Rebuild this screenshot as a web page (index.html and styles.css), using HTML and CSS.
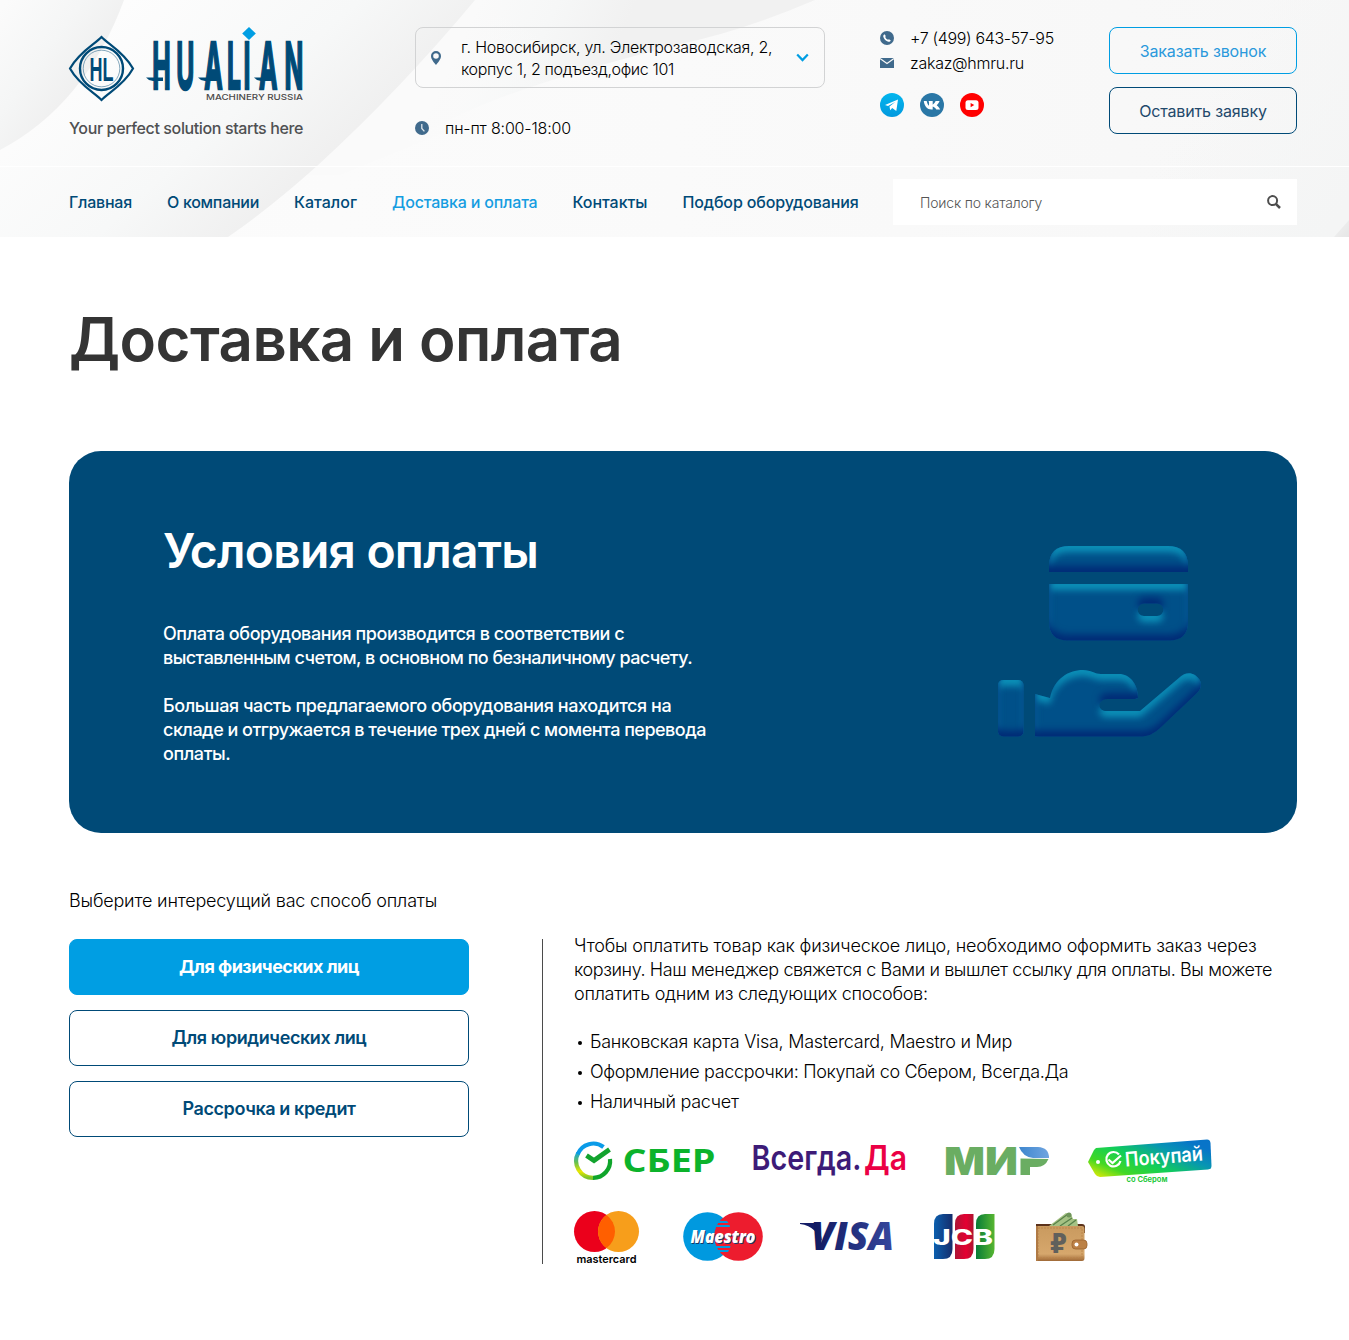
FILE: index.html
```html
<!DOCTYPE html>
<html lang="ru">
<head>
<meta charset="utf-8">
<title>Доставка и оплата</title>
<link rel="stylesheet" href="styles.css">
</head>
<body>
<header class="header">
  <svg class="header-bg" viewBox="0 0 1349 237" preserveAspectRatio="none" aria-hidden="true">
    <defs>
      <linearGradient id="b0" x1="0" x2="1"><stop offset="0" stop-color="#fcfcfc"/><stop offset=".5" stop-color="#fafafa"/><stop offset="1" stop-color="#f7f7f7"/></linearGradient>
      <linearGradient id="b1" gradientUnits="userSpaceOnUse" x1="0" y1="10" x2="90" y2="75"><stop offset="0" stop-color="#fbfbfb"/><stop offset=".55" stop-color="#f5f6f6"/><stop offset="1" stop-color="#efefef"/></linearGradient>
      <linearGradient id="b2" gradientUnits="userSpaceOnUse" x1="130" y1="0" x2="300" y2="190"><stop offset="0" stop-color="#fdfdfd"/><stop offset=".6" stop-color="#f7f8f8"/><stop offset="1" stop-color="#efefef"/></linearGradient>
      <linearGradient id="b3" gradientUnits="userSpaceOnUse" x1="480" y1="0" x2="610" y2="60"><stop offset="0" stop-color="#fafafa"/><stop offset=".5" stop-color="#f6f7f7"/><stop offset="1" stop-color="#f1f1f1"/></linearGradient>
      <linearGradient id="b4" x1="0" x2="1" y1="0" y2="1"><stop offset="0" stop-color="#f1f2f2"/><stop offset="1" stop-color="#e6e6e6"/></linearGradient>
      <linearGradient id="b5" gradientUnits="userSpaceOnUse" x1="1200" y1="100" x2="1349" y2="200"><stop offset="0" stop-color="#f4f5f5" stop-opacity="0"/><stop offset="1" stop-color="#f4f5f5"/></linearGradient>
      <linearGradient id="b6" gradientUnits="userSpaceOnUse" x1="560" y1="60" x2="400" y2="130"><stop offset="0" stop-color="#fafafa" stop-opacity="0"/><stop offset="1" stop-color="#fafafa"/></linearGradient>
    </defs>
    <rect width="1349" height="237" fill="url(#b0)"/>
    <path d="M400 0H815Q740 32 680 44Q500 90 440 125L340 175Z" fill="url(#b3)"/>
    <path d="M470 0L600 70L340 175L300 175Z" fill="url(#b6)"/>
    <path d="M124 0H475Q400 90 317 166Q270 208 228 237H0V150Q85 110 124 0Z" fill="url(#b2)"/>
    <path d="M0 0H124Q85 105 0 150Z" fill="url(#b1)"/>
    <rect x="1150" width="199" height="237" fill="url(#b5)"/>
    <path d="M1349 220L1334 237H1349Z" fill="url(#b4)"/>
    <path d="M0 166.500H1349" stroke="#fff"/>
  </svg>
  <div class="container header-top">
    <div class="brand">
      <svg class="logo" width="236" height="76" viewBox="0 0 236 76">
        <g fill="none" stroke="#004a77">
          <path d="M32.500 10C39 17 55 25 64 41.500C55 58 39 66 32.500 73C26 66 10 58 1 41.500C10 25 26 17 32.500 10Z" stroke-width="2.200"/>
          <circle cx="32.500" cy="41.500" r="21.500" stroke-width="2.400"/>
          <circle cx="32.500" cy="41.500" r="18.300" stroke-width=".8" opacity=".6"/>
        </g>
        <text x="20.500" y="53.500" class="logo-hl" textLength="24" lengthAdjust="spacingAndGlyphs">HL</text>
        <g fill="#004a77">
          <g transform="translate(0 62) scale(.38 1)">
            <text class="logo-word" x="219 282 356 416 459 500 567" y="0">HUALIAN</text>
          </g>
          <path d="M77 50.500H94V54H84L80 53Z"/>
          <path d="M129 50.500H150V54H136L132 53Z"/>
          <path d="M185 50.500H205V54H192L188 53Z"/>
        </g>
        <path d="M180 0L186.800 6.500L180 13L173.200 6.500Z" fill="#009ee3"/>
        <text x="137" y="72.800" class="logo-sub" textLength="97" lengthAdjust="spacingAndGlyphs">MACHINERY RUSSIA</text>
      </svg>
      <p class="slogan">Your perfect solution starts here</p>
    </div>
    <div class="place">
      <div class="address">
        <svg width="10" height="14" viewBox="0 0 10 14"><path fill="#406a8c" fill-rule="evenodd" d="M5 0a5 5 0 0 1 5 5c0 3.200-3 6.500-5 9C3 11.500 0 8.200 0 5a5 5 0 0 1 5-5Zm0 2.200a2.800 2.800 0 1 0 0 5.600 2.800 2.800 0 0 0 0-5.600Z"/></svg>
        <p class="address-text"><span class="line">г. Новосибирск, ул. Электрозаводская, 2,</span><span class="line snug">корпус 1, 2 подъезд,офис 101</span></p>
        <svg class="chevron" width="13" height="9" viewBox="0 0 13 9"><path d="M1.200 1.500L6.500 7.100L11.800 1.500" fill="none" stroke="#009ee3" stroke-width="2.200"/></svg>
      </div>
      <div class="hours">
        <svg width="14" height="14" viewBox="0 0 14 14"><circle cx="7" cy="7" r="7" fill="#406a8c"/><path d="M6.800 3V7.400L9.400 10.400" fill="none" stroke="#dfe6eb" stroke-width="1.300"/></svg>
        <span>пн-пт 8:00-18:00</span>
      </div>
    </div>
    <div class="contacts">
      <div class="contact phone">
        <svg width="14" height="14" viewBox="0 0 14 14"><circle cx="7" cy="7" r="7" fill="#406a8c"/><path d="M4.500 3.200L5.800 4.900 5.200 6C5.700 7.200 6.700 8.300 8 8.800L9 8.200L10.800 9.500C10.300 10.800 9 11.200 7.700 10.600C5.600 9.700 3.900 8 3.300 5.700C3.100 4.600 3.600 3.700 4.500 3.200Z" fill="#fff"/></svg>
        <span>+7 (499) 643-57-95</span>
      </div>
      <div class="contact">
        <svg width="14" height="14" viewBox="0 0 14 14"><rect y="2" width="14" height="10" fill="#406a8c"/><path d="M0 2.500L7 7.500L14 2.500" fill="none" stroke="#f8f8f8" stroke-width="1.200"/></svg>
        <span>zakaz@hmru.ru</span>
      </div>
      <div class="socials">
        <svg width="24" height="24" viewBox="0 0 24 24"><defs><linearGradient id="tg" x2="0" y2="1"><stop stop-color="#03b6ee"/><stop offset="1" stop-color="#0299de"/></linearGradient></defs><circle cx="12" cy="12" r="12" fill="url(#tg)"/><path d="M5 12L18 6.500L16.300 18L12.200 15.100L10.200 17.200L9.500 13.600L15.500 8.800L8 13.100Z" fill="#fff"/></svg>
        <svg width="24" height="24" viewBox="0 0 24 24"><circle cx="12" cy="12" r="12" fill="#2a77a6"/><path d="M3.800 8H6.700C7.100 10.200 8.100 12.100 9 12.700V8.800L8.300 8H12.700V11.700C13.600 11.200 14.900 9.500 15.600 8H19.600C19 9.800 17.600 11.300 16.700 12.200C17.700 12.900 19.400 14.600 20.200 16.500H16.300C15.600 15.200 14.200 13.900 12.700 13.500V16.500H11.500C7.300 16.500 4.400 13.300 3.800 8Z" fill="#fff"/></svg>
        <svg width="24" height="24" viewBox="0 0 24 24"><circle cx="12" cy="12" r="12" fill="#f00"/><rect x="5.500" y="7.300" width="13" height="9.700" rx="2.500" fill="#fff"/><path d="M10.600 10L14.300 12.100L10.600 14.200Z" fill="#f00"/></svg>
      </div>
    </div>
    <div class="actions">
      <a class="outline-btn accent">Заказать звонок</a>
      <a class="outline-btn">Оставить заявку</a>
    </div>
  </div>
  <div class="container header-nav">
    <nav class="nav">
      <a class="n1">Главная</a><a class="n2">О компании</a><a class="n3">Каталог</a><a class="n4 active">Доставка и оплата</a><a class="n5">Контакты</a><a class="n6">Подбор оборудования</a>
    </nav>
    <div class="search">
      <span>Поиск по каталогу</span>
      <svg width="14" height="14" viewBox="0 0 14 14" fill="none" stroke="#4d4d4d"><circle cx="5.600" cy="5.600" r="4.500" stroke-width="2"/><path d="M8.800 8.800L13 13" stroke-width="2.500"/></svg>
    </div>
  </div>
</header>
<main class="container">
  <h1>Доставка и оплата</h1>
  <section class="terms">
    <div class="terms-text">
      <h2>Условия оплаты</h2>
      <p><span class="line">Оплата оборудования производится в соответствии с</span><span class="line tight">выставленным счетом, в основном по безналичному расчету.</span></p>
      <p><span class="line">Большая часть предлагаемого оборудования находится на</span><span class="line snug">складе и отгружается в течение трех дней с момента перевода</span><span class="line">оплаты.</span></p>
    </div>
    <svg class="terms-art" width="240" height="220" viewBox="0 0 240 220">
      <defs>
        <filter id="emboss" filterUnits="userSpaceOnUse" x="0" y="0" width="240" height="230" color-interpolation-filters="sRGB">
          <feComponentTransfer in="SourceAlpha" result="inv"><feFuncA type="table" tableValues="1 0"/></feComponentTransfer>
          <feGaussianBlur in="inv" stdDeviation="3.500" result="blur"/>
          <feOffset in="blur" dy="6" result="down"/>
          <feFlood flood-color="#0c93ba"/><feComposite in2="down" operator="in"/><feComposite in2="SourceAlpha" operator="in" result="light"/>
          <feOffset in="blur" dy="-6" result="up"/>
          <feFlood flood-color="#002b76"/><feComposite in2="up" operator="in"/><feComposite in2="SourceAlpha" operator="in" result="dark"/>
          <feMerge><feMergeNode in="SourceGraphic"/><feMergeNode in="light"/><feMergeNode in="dark"/></feMerge>
        </filter>
      </defs>
      <g fill="#005089" filter="url(#emboss)">
        <path d="M69 42V36Q69 16 89 16H188Q208 16 208 36V42Z"/>
        <path fill-rule="evenodd" d="M69 54H208V92Q208 110.500 189 110.500H88Q69 110.500 69 92ZM164 73.500A6.200 6.200 0 0 0 164 86H177A6.200 6.200 0 0 0 177 73.500Z"/>
        <rect x="18" y="150" width="25.500" height="56.500" rx="5"/>
        <path d="M55 164L70 168C74 149 88 140 103 140C111 140 115 144 121 144H139C150 144 158 154 158 168L155 169H127C117 170 117 181 127 181H160L200 147C204 143 210 142 215 145C222 150 223 157 217 163L179 199C173 204 168 206.500 160 206.500H55Z"/>
      </g>
    </svg>
  </section>
  <p class="choose">Выберите интересущий вас способ оплаты</p>
  <section class="methods">
    <div class="tabs">
      <a class="tab selected">Для физических лиц</a>
      <a class="tab">Для юридических лиц</a>
      <a class="tab">Рассрочка и кредит</a>
    </div>
    <div class="details">
      <p><span class="line soft">Чтобы оплатить товар как физическое лицо, необходимо оформить заказ через</span><span class="line tight">корзину. Наш менеджер свяжется с Вами и вышлет ссылку для оплаты. Вы можете</span><span class="line">оплатить одним из следующих способов:</span></p>
      <ul>
        <li>Банковская карта Visa, Mastercard, Maestro и Мир</li>
        <li class="snug">Оформление рассрочки: Покупай со Сбером, Всегда.Да</li>
        <li>Наличный расчет</li>
      </ul>
      <div class="pay-row first">
        <svg width="140" height="45" viewBox="0 0 140 45">
          <defs><linearGradient id="sl" x2="0" y2="1"><stop stop-color="#1aa6d8"/><stop offset=".4" stop-color="#6cc24a"/><stop offset=".75" stop-color="#e9e600"/><stop offset="1" stop-color="#7ac52a"/></linearGradient></defs>
          <g fill="none" stroke-width="4.200"><path d="M4.200 14A16.800 16.800 0 0 0 19 38.800" stroke="url(#sl)"/><path d="M3.800 15A16.800 16.800 0 0 1 29.500 8" stroke="#0a9be8"/><path d="M19 38.800A16.800 16.800 0 0 0 36 20" stroke="#0fa52b"/><path d="M12.500 16.500L20 21.500L35.500 10.500" stroke="#12a32e" stroke-width="4.800"/></g>
          <text x="48.500" y="33" class="sber" textLength="93" lengthAdjust="spacingAndGlyphs">СБЕР</text>
        </svg>
        <svg width="154" height="45" viewBox="0 0 154 45">
          <text x="-1.500" y="31" class="vsegda" textLength="110" lengthAdjust="spacingAndGlyphs">Всегда.</text>
          <text x="111" y="31" class="vsegda da" textLength="43" lengthAdjust="spacingAndGlyphs">Да</text>
        </svg>
        <svg width="104" height="45" viewBox="0 0 104 45">
          <defs><linearGradient id="mi"><stop stop-color="#3e86ce"/><stop offset="1" stop-color="#70a5e0"/></linearGradient></defs>
          <text x="-2" y="36" class="mir" textLength="74" lengthAdjust="spacingAndGlyphs">МИ</text>
          <path d="M74.500 19.500V36H84V28H91Q99 28 102.500 20Z" fill="#6aad62"/>
          <path d="M73 8H92Q103 8.500 103 19H87Q77 18 73 8Z" fill="url(#mi)"/>
        </svg>
        <svg width="124" height="45" viewBox="0 0 124 45">
          <defs><linearGradient id="po" y1="1" y2=".3"><stop stop-color="#ffed00"/><stop offset=".25" stop-color="#42d824"/><stop offset=".5" stop-color="#12ce58"/><stop offset=".78" stop-color="#0795b3"/><stop offset="1" stop-color="#0874c8"/></linearGradient></defs>
          <path d="M7 9L118 .600Q121 .600 121.500 4L122.500 27Q122.500 30 119 30.500L11 38Q8 38 6 35L-1 23L5 11Z" fill="url(#po)"/>
          <circle cx="9" cy="23" r="2" fill="#fff"/>
          <path d="M30 15.500A7.200 7.200 0 1 0 31.500 22M19.500 20.500L23.500 24L32 16.500" fill="none" stroke="#fff" stroke-width="2.200"/>
          <text x="36.500" y="27.500" class="pokupai" textLength="78" lengthAdjust="spacingAndGlyphs" transform="rotate(-4.500 37 28)">Покупай</text>
          <text x="37.500" y="42.500" class="so" textLength="41" lengthAdjust="spacingAndGlyphs">со Сбером</text>
        </svg>
      </div>
      <div class="pay-row second">
        <svg width="65" height="53" viewBox="0 0 65 53">
          <circle cx="20.500" cy="20.500" r="20.500" fill="#eb001b"/><circle cx="44.500" cy="20.500" r="20.500" fill="#f79e1b"/><path d="M32.500 3.900A20.500 20.500 0 0 1 32.500 37.100A20.500 20.500 0 0 1 32.500 3.900Z" fill="#ff5f00"/>
          <text x="2.500" y="51.500" class="mc" textLength="60" lengthAdjust="spacingAndGlyphs">mastercard</text>
        </svg>
        <svg width="80" height="53" viewBox="0 0 80 53">
          <circle cx="24.500" cy="25.500" r="24.300" fill="#0099df"/><circle cx="55.500" cy="25.500" r="24.300" fill="#ed1c2e"/>
          <g fill="#0099df"><path d="M36 10H44L45.500 12H34.500ZM33.500 14H46.500L47 16H33ZM32.500 35H47.500L47 37H33ZM34 39H46L45 41H35Z"/></g>
          <text x="7.500" y="31.500" class="maestro" textLength="65" lengthAdjust="spacingAndGlyphs">Maestro</text>
        </svg>
        <svg width="93" height="53" viewBox="0 0 93 53">
          <defs><linearGradient id="vi"><stop stop-color="#10195f"/><stop offset="1" stop-color="#36479e"/></linearGradient></defs>
          <path d="M0 12H14Q18.500 12 19.500 17L22 30L15 20Q9 14 0 13Z" fill="#141d66"/>
          <text x="11" y="39" class="visa" textLength="83" lengthAdjust="spacingAndGlyphs" fill="url(#vi)">VISA</text>
        </svg>
        <svg width="62" height="53" viewBox="0 0 62 53">
          <defs><linearGradient id="j1"><stop stop-color="#0b5fae"/><stop offset="1" stop-color="#152d6c"/></linearGradient><linearGradient id="j2"><stop stop-color="#ac1636"/><stop offset=".6" stop-color="#e50032"/><stop offset="1" stop-color="#ad1430"/></linearGradient><linearGradient id="j3"><stop stop-color="#087c38"/><stop offset="1" stop-color="#57b631"/></linearGradient></defs>
          <path d="M10 3H19.500V38Q19.500 48 10 48H1V13Q1 3 10 3Z" fill="url(#j1)"/><path d="M31 3H40.500V38Q40.500 48 31 48H22V13Q22 3 31 3Z" fill="url(#j2)"/><path d="M52 3H61.500V38Q61.500 48 52 48H43V13Q43 3 52 3Z" fill="url(#j3)"/>
          <text x="0" y="33.500" class="jcb" textLength="60" lengthAdjust="spacingAndGlyphs">JCB</text>
        </svg>
        <svg width="53" height="53" viewBox="0 0 53 53">
          <defs><linearGradient id="wa" x2="0" y2="1"><stop stop-color="#c99a5f"/><stop offset=".8" stop-color="#d6a76c"/><stop offset="1" stop-color="#9f6937"/></linearGradient></defs>
          <path d="M1 13H47Q50 13 50 16V22H1Z" fill="#5b321b"/>
          <path d="M14 15L31 2L36 3L38 8L42 8L43 15Z" fill="#a5c284"/><path d="M18 14L33 3M25 15L37 7M33 15L41 9" stroke="#58804a" stroke-width="1.300"/><circle cx="34" cy="4" r="2.500" fill="#6f955b"/>
          <path d="M1 15H47Q49.500 15 49.500 18V47Q49.500 50 47 50H3Q1 50 1 48Z" fill="url(#wa)"/><path d="M3 17H47V47H3Z" fill="none" stroke="#b88247" stroke-width=".8" stroke-dasharray="2 1"/>
          <path d="M1 15V50H3V15Z" fill="#b07a45"/>
          <rect x="37" y="29" width="15" height="9" rx="3.500" fill="#bc8146" stroke="#9b622f" stroke-width=".8"/><circle cx="41.500" cy="33.500" r="2" fill="#fff"/>
          <text x="15" y="42" class="ruble" textLength="17" lengthAdjust="spacingAndGlyphs">₽</text>
        </svg>
      </div>
    </div>
  </section>
</main>
</body>
</html>
```
FILE: styles.css
```css
* { box-sizing: border-box; }
body { margin: 0; background: #fff; color: #000; font-family: Inter, "Open Sans", sans-serif; font-size: 18px; font-weight: 350; line-height: 24px; letter-spacing: -.27px; }
p, h1, h2, ul { margin: 0; padding: 0; }
svg { display: block; flex: none; overflow: visible; }
svg text { letter-spacing: 0; }
.container { width: 1228px; margin-left: 69px; }
.line { display: block; white-space: nowrap; }
.soft { letter-spacing: -.19px; }
.snug { letter-spacing: -.35px; }
.tight { letter-spacing: -.41px; }

.header { position: relative; height: 237px; font-size: 16px; }
.header-bg { position: absolute; inset: 0; width: 100%; height: 100%; overflow: hidden; z-index: -1; }
.header-top { display: flex; height: 167px; padding-top: 27px; }
.brand { width: 346px; }
.slogan { margin-top: 13px; font-weight: 500; color: #4f5052; letter-spacing: -.375px; }
.place { width: 465px; letter-spacing: -.25px; }
.address { display: flex; align-items: center; width: 410px; height: 61px; padding: 0 15px; border: 1px solid #d2d3d4; border-radius: 8px; line-height: 22px; }
.address-text { flex: 1; padding-left: 20px; }
.hours { display: flex; align-items: center; gap: 16px; margin-top: 28px; letter-spacing: -.16px; }
.contacts { width: 229px; letter-spacing: -.26px; }
.contact { display: flex; align-items: center; gap: 16px; height: 25px; }
.contact.phone { height: 22px; letter-spacing: -.34px; margin-bottom: 1px; }
.socials { display: flex; gap: 16px; margin-top: 18px; }
.actions { display: flex; flex-direction: column; gap: 13px; width: 188px; font-weight: 400; letter-spacing: -.15px; }
.outline-btn { display: flex; align-items: center; justify-content: center; height: 47px; border: 1px solid #004a77; border-radius: 8px; color: #23496b; }
.outline-btn.accent { border-color: #009ee3; color: #2a99dc; }
.header-nav { display: flex; justify-content: space-between; padding-top: 12px; }
.nav { display: flex; align-items: center; gap: 35px; height: 46px; color: #004a77; font-weight: 500; white-space: nowrap; }
.nav .active { color: #159de1; }
.n1 { letter-spacing: -.22px; }
.n2 { letter-spacing: -.28px; }
.n3 { letter-spacing: .02px; }
.n4 { letter-spacing: -.18px; }
.n5 { letter-spacing: -.04px; }
.n6 { letter-spacing: -.13px; }
.search { display: flex; align-items: center; justify-content: space-between; width: 404px; height: 46px; padding: 0 16px 0 27px; background: #fff; color: #555; font-size: 14px; letter-spacing: -.19px; }
.search span { padding-top: 1px; }

h1 { padding-top: 62px; font-size: 60px; line-height: 80px; font-weight: 600; color: #343434; letter-spacing: -.56px; }
.terms { display: flex; justify-content: space-between; height: 382px; margin-top: 72px; padding: 70px 77px 0 94px; border-radius: 32px; background: #004a77; color: #fff; }
.terms h2 { margin-bottom: 41px; font-size: 48px; line-height: 60px; font-weight: 600; letter-spacing: -.77px; }
.terms p { margin-bottom: 24px; font-weight: 450; letter-spacing: -.43px; }
.terms .snug { letter-spacing: -.51px; }
.terms .tight { letter-spacing: -.56px; }
.terms-art { margin-top: 9px; }
.choose { margin-top: 56px; letter-spacing: -.19px; }
.methods { display: flex; margin-top: 26px; }
.tabs { display: flex; flex-direction: column; gap: 15px; width: 400px; margin-right: 73px; }
.tab { display: flex; align-items: center; justify-content: center; height: 56px; border: 1px solid #004a77; border-radius: 8px; color: #004a77; font-weight: 600; letter-spacing: -.4px; }
.tab.selected { border-color: #009ee3; background: #009ee3; color: #fff; font-weight: 700; letter-spacing: -.53px; }
.details { flex: 1; height: 325px; padding-left: 31px; border-left: 1px solid #4b4b4b; }
.details p { margin-top: -5px; }
.details ul { margin-top: 21px; list-style: none; line-height: 30px; }
.details li { position: relative; padding-left: 16px; white-space: nowrap; }
.details li::before { content: ""; position: absolute; left: 4px; top: 14px; width: 4px; height: 4px; border-radius: 50%; background: #000; }
.pay-row { display: flex; }
.pay-row.first { gap: 39px; margin-top: 22px; }
.pay-row.second { margin-top: 27px; }
.pay-row.second svg + svg { margin-left: 40px; }
.pay-row.second svg:nth-child(2) { margin-left: 44px; }
.pay-row.second svg:nth-child(3) { margin-left: 37px; }

.logo-hl { font: 700 34px "Liberation Sans Narrow", "Liberation Sans", sans-serif; fill: #004a77; }
.logo-word { font: 700 65px Inter, sans-serif; stroke: #004a77; stroke-width: 2.500px; }
.logo-sub { font: 500 8px Inter, sans-serif; fill: #4a4a4a; }
.sber { font: 700 32px "Open Sans", sans-serif; fill: #0cb32b; }
.vsegda { font: 600 34px Inter, sans-serif; fill: #3d1b78; }
.vsegda.da { fill: #eb0045; }
.mir { font: 900 38px Inter, sans-serif; fill: #6aad62; }
.pokupai { font: 600 20px Inter, sans-serif; fill: #fff; }
.so { font: 600 7.500px Inter, sans-serif; fill: #10c52d; }
.mc { font: 600 11px Inter, sans-serif; fill: #000; }
.maestro { font: italic 800 18px "Open Sans", sans-serif; fill: #fff; text-shadow: 1px 1px 0 #173b69; }
.visa { font: italic 800 38px "Open Sans", sans-serif; }
.jcb { font: 800 21px Inter, sans-serif; fill: #fff; }
.ruble { font: 700 27px "DejaVu Sans", sans-serif; fill: #60605c; }
```
